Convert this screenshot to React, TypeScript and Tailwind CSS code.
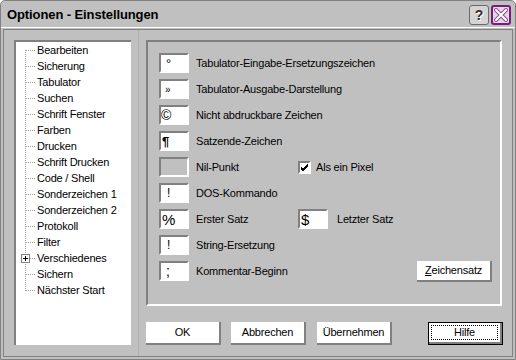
import React from "react";

const treeItems = [
  "Bearbeiten",
  "Sicherung",
  "Tabulator",
  "Suchen",
  "Schrift Fenster",
  "Farben",
  "Drucken",
  "Schrift Drucken",
  "Code / Shell",
  "Sonderzeichen 1",
  "Sonderzeichen 2",
  "Protokoll",
  "Filter",
  "Verschiedenes",
  "Sichern",
  "Nächster Start",
];

function TreeRow({ label, i, n, plus }: { label: string; i: number; n: number; plus: boolean }) {
  return (
    <div className="flex h-[16px] items-center">
      <svg width="21" height="16" className="shrink-0" shapeRendering="crispEdges">
        <line x1="9.5" y1={i === 0 ? 8 : 0} x2="9.5" y2={i === n - 1 ? 9 : 16} stroke="#a0a0a0" strokeDasharray="1 1" />
        <line x1={plus ? 14 : 10} y1="8.5" x2="19" y2="8.5" stroke="#a0a0a0" strokeDasharray="1 1" />
        {plus && (
          <>
            <rect x="5.5" y="4.5" width="8" height="8" fill="#fff" stroke="#808080" />
            <line x1="7" y1="8.5" x2="12" y2="8.5" stroke="#000" />
            <line x1="9.5" y1="6" x2="9.5" y2="11" stroke="#000" />
          </>
        )}
      </svg>
      <span className="whitespace-nowrap">{label}</span>
    </div>
  );
}

function Box({ children, grey, className }: { children?: React.ReactNode; grey?: boolean; className?: string }) {
  return (
    <div
      className={
        "w-[30px] h-[20px] shrink-0 border-2 border-t-[#808080] border-l-[#808080] border-r-white border-b-white flex leading-none " +
        (grey ? "bg-[#c0c0c0] " : "bg-white ") +
        (className ?? "items-center")
      }
    >
      {children}
    </div>
  );
}

function Row({ box, label, children }: { box: React.ReactNode; label: string; children?: React.ReactNode }) {
  return (
    <div className="flex h-[20px] items-center">
      <div className="flex w-[139px] shrink-0 items-center">
        {box}
        <span className="ml-[7px] whitespace-nowrap">{label}</span>
      </div>
      {children}
    </div>
  );
}

function Btn({ children, className }: { children: React.ReactNode; className?: string }) {
  return (
    <div
      className={
        "w-[75px] h-[23px] bg-white border-r-2 border-b-2 border-[#808080] flex items-center justify-center " +
        (className ?? "")
      }
    >
      {children}
    </div>
  );
}

export default function App() {
  const n = treeItems.length;
  return (
    <div className="w-[516px] h-[360px] bg-[#c0c0c0] border border-[#808080] rounded-t-[5px] flex flex-col overflow-hidden text-[11px] tracking-[-0.2px] text-black font-['Liberation_Sans',Arial,sans-serif]">
      {/* Title bar */}
      <div className="h-[27px] shrink-0 border-b border-white flex items-center pl-[6px] pr-[4px]">
        <span className="text-[13px] font-bold tracking-[-0.1px] leading-none">Optionen - Einstellungen</span>
        <div className="ml-auto flex gap-[2px] mt-[2px]">
          <div className="w-[20px] h-[20px] rounded-[3px] border border-[#6a6a6a] bg-[#d4d4d4] flex items-center justify-center">
            <span className="text-[14px] font-bold leading-none text-[#303030] [text-shadow:1px_1px_0_#fff]">?</span>
          </div>
          <div className="w-[20px] h-[20px] rounded-[3px] border-2 border-[#7a1a7a] bg-[#e4d8e4] flex items-center justify-center">
            <svg width="14" height="14" viewBox="0 0 14 14">
              <path d="M2 2 L12 12 M12 2 L2 12" stroke="#8a4a8a" strokeWidth="4" strokeLinecap="square" />
              <path d="M2 2 L12 12 M12 2 L2 12" stroke="#fff" strokeWidth="2" strokeLinecap="square" />
            </svg>
          </div>
        </div>
      </div>

      {/* Client frame */}
      <div className="mt-[1px] mx-[2px] h-[328px] shrink-0 border border-[#808080] flex">
        {/* Tree */}
        <div className="pl-[10px] pt-[10px]">
          <div className="w-[117px] h-[305px] bg-white border-t-2 border-l-2 border-t-[#808080] border-l-[#808080]">
            {treeItems.map((t, i) => (
              <TreeRow key={t} label={t} i={i} n={n} plus={t === "Verschiedenes"} />
            ))}
          </div>
        </div>
        {/* splitter */}
        <div className="ml-[7px] w-px self-stretch bg-[#b0b0b0]" />

        {/* Right side */}
        <div className="ml-[7px] pt-[10px] flex flex-col">
          <div className="w-[356px] h-[266px] border-2 border-t-[#808080] border-l-[#808080] border-r-white border-b-white">
            <div className="flex flex-col gap-[6px] pl-[11px] pt-[11px]">
              <Row
                box={
                  <Box className="items-center pl-[5px]">
                    <span className="text-[13px]">°</span>
                  </Box>
                }
                label="Tabulator-Eingabe-Ersetzungszeichen"
              />
              <Row
                box={
                  <Box className="items-end pl-[4px] pb-[2px]">
                    <span className="text-[10px]">»</span>
                  </Box>
                }
                label="Tabulator-Ausgabe-Darstellung"
              />
              <Row
                box={
                  <Box className="items-center pl-[0px]">
                    <span className="text-[14px]">©</span>
                  </Box>
                }
                label="Nicht abdruckbare Zeichen"
              />
              <Row
                box={
                  <Box className="items-center pl-[1px]">
                    <span className="text-[13px] font-bold">¶</span>
                  </Box>
                }
                label="Satzende-Zeichen"
              />
              <Row box={<Box grey />} label="Nil-Punkt">
                <div className="w-[13px] h-[13px] bg-white border-2 border-t-[#808080] border-l-[#808080] border-r-white border-b-white flex items-center justify-center">
                  <svg width="9" height="9" viewBox="0 0 9 9" shapeRendering="crispEdges">
                    <path d="M1 4 L3 6 L8 1 M1 5 L3 7 L8 2 M1 6 L3 8 L8 3" stroke="#000" strokeWidth="1" fill="none" />
                  </svg>
                </div>
                <span className="ml-[5px] whitespace-nowrap">Als ein Pixel</span>
              </Row>
              <Row
                box={
                  <Box className="items-center pl-[6px]">
                    <span className="text-[12px]">!</span>
                  </Box>
                }
                label="DOS-Kommando"
              />
              <Row
                box={
                  <Box className="items-center pl-[1px]">
                    <span className="text-[15px]">%</span>
                  </Box>
                }
                label="Erster Satz"
              >
                <Box className="items-center pl-[1px]">
                  <span className="text-[15px]">$</span>
                </Box>
                <span className="ml-[9px] whitespace-nowrap">Letzter Satz</span>
              </Row>
              <Row
                box={
                  <Box className="items-center pl-[6px]">
                    <span className="text-[12px]">!</span>
                  </Box>
                }
                label="String-Ersetzung"
              />
              <Row
                box={
                  <Box className="items-end pl-[5px] pb-[1px]">
                    <span className="text-[14px]">;</span>
                  </Box>
                }
                label="Kommentar-Beginn"
              >
                <div className="ml-[119px] w-[75px] h-[21px] bg-white border-r-2 border-b-2 border-[#808080] flex items-center justify-center">
                  <span>
                    <span className="underline">Z</span>eichensatz
                  </span>
                </div>
              </Row>
            </div>
          </div>

          {/* Buttons */}
          <div className="mt-[16px] flex">
            <Btn>OK</Btn>
            <Btn className="ml-[10px]">Abbrechen</Btn>
            <Btn className="ml-[11px]">Übernehmen</Btn>
            <div className="ml-[36px] w-[75px] h-[23px] border border-black">
              <div className="w-full h-full bg-white border-r-2 border-b-2 border-[#808080] p-[2px]">
                <div className="w-full h-full border border-dotted border-black flex items-center justify-center">
                  Hilfe
                </div>
              </div>
            </div>
          </div>
        </div>
      </div>
    </div>
  );
}
